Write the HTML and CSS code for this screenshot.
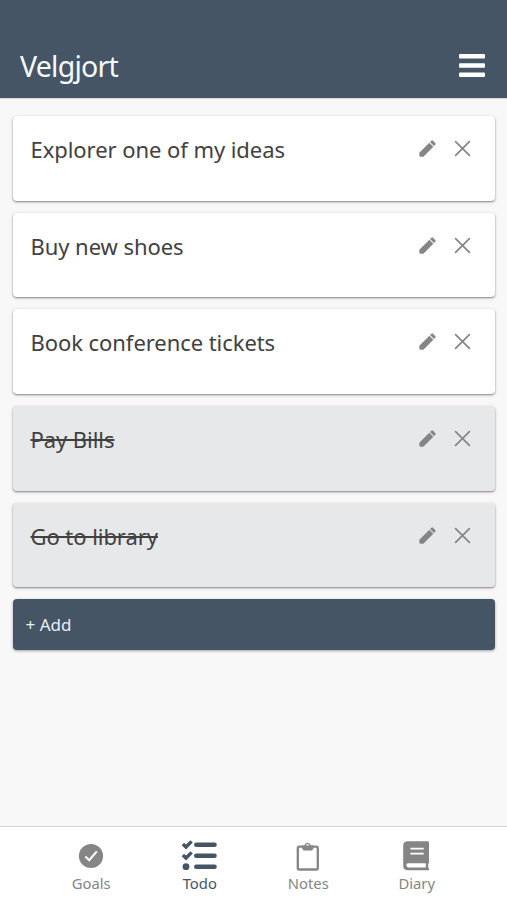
FILE: index.html
```html
<!DOCTYPE html>
<html lang="en">
<head>
<meta charset="utf-8">
<title>Velgjort</title>
<link rel="stylesheet" href="styles.css">
</head>
<body>
<svg class="defs" width="0" height="0">
  <symbol id="pencil" viewBox="0 0 16 16"><path d="M0.3 15.7V11.9L9.7 2.5L13.5 6.3L4.1 15.7H1.3Q.3 15.7.3 14.7Z"/><path d="M10.4 1.9L11.6.7Q12.4 0 13.2.7L15.3 2.8Q16 3.6 15.3 4.4L14.1 5.6Z"/></symbol>
  <symbol id="cross" viewBox="0 0 16 16"><path d="M1.5 1.5L14.5 14.5M14.5 1.5L1.5 14.5" fill="none" stroke="currentColor" stroke-width="1.6" stroke-linecap="round"/></symbol>
</svg>
<div class="app">
  <header class="header">
    <h1 class="title">Velgjort</h1>
    <svg class="menu" viewBox="0 0 26 23"><rect width="26" height="4.6" rx="1"/><rect y="9.2" width="26" height="4.6" rx="1"/><rect y="18.4" width="26" height="4.6" rx="1"/></svg>
  </header>
  <main class="list">
    <div class="card"><span class="text">Explorer one of my ideas</span><svg class="icon"><use href="#pencil"/></svg><svg class="icon"><use href="#cross"/></svg></div>
    <div class="card"><span class="text">Buy new shoes</span><svg class="icon"><use href="#pencil"/></svg><svg class="icon"><use href="#cross"/></svg></div>
    <div class="card"><span class="text">Book conference tickets</span><svg class="icon"><use href="#pencil"/></svg><svg class="icon"><use href="#cross"/></svg></div>
    <div class="card done"><span class="text">Pay Bills</span><svg class="icon"><use href="#pencil"/></svg><svg class="icon"><use href="#cross"/></svg></div>
    <div class="card done"><span class="text">Go to library</span><svg class="icon"><use href="#pencil"/></svg><svg class="icon"><use href="#cross"/></svg></div>
    <div class="add">+ Add</div>
  </main>
  <nav class="tabs">
    <div class="tab"><svg class="tab-icon" viewBox="0 0 36 32"><circle cx="18" cy="17" r="12.1"/><path d="M12.3 17.5L16.2 21.3L23.8 12.4" fill="none" stroke="#fff" stroke-width="2.1"/></svg><span>Goals</span></div>
    <div class="tab active"><svg class="tab-icon" viewBox="0 0 36 32"><g fill="none" stroke="currentColor"><path d="M.9 5L4 8L9.6 2.4M.9 16L4 19L9.6 13.4" stroke-width="3.4"/><path d="M14.2 5.8H32.6M14.2 16.8H32.6M14.2 27.8H32.6" stroke-width="4.4" stroke-linecap="round"/></g><circle cx="4" cy="27.7" r="3.4"/></svg><span>Todo</span></div>
    <div class="tab"><svg class="tab-icon" viewBox="0 0 36 32"><rect x="7.8" y="7.7" width="20" height="22.8" rx="1.5" fill="none" stroke="currentColor" stroke-width="2.3"/><path fill-rule="evenodd" d="M12 6.4H14.3A3.4 3.4 0 0 1 20.9 6.4H23.6V9.2L22 11.6H13.6L12 9.2ZM16.2 6.5A1.4 1.4 0 1 0 19 6.5A1.4 1.4 0 1 0 16.2 6.5Z"/></svg><span>Notes</span></div>
    <div class="tab"><svg class="tab-icon" viewBox="0 0 36 32"><path fill-rule="evenodd" d="M8.2 2.2H29Q30 2.2 30 3.2V23.5L29.2 25V28.8L30 29.2V31.2H8.2Q4.2 31 4.2 27V6.4Q4.2 2.5 8.2 2.2ZM9.2 24.2Q7.4 24.4 7.4 26.3T9.2 28.4H26.8V24.2ZM11.4 8.7V10.5H24.7V8.7ZM11.4 13.7V15.5H24.7V13.7Z"/></svg><span>Diary</span></div>
  </nav>
</div>
</body>
</html>
```
FILE: styles.css
```css
* { box-sizing: border-box; }
body { margin: 0; font-family: "Noto Sans", "Open Sans", sans-serif; }
.defs { display: none; }
.app { height: 900px; display: flex; flex-direction: column; background: #f8f8f8; }
.header { height: 98px; flex: none; padding: 33px 22px 0 20px; display: flex; justify-content: space-between; align-items: center; background: #455565; color: #f5faff; box-shadow: 0 1px 1px rgba(0,0,0,.12); }
.title { margin: 0; font-size: 28.5px; font-weight: 400; line-height: 38px; letter-spacing: -.75px; }
.menu { width: 26px; height: 23px; fill: #fff; }
.list { flex: 1; padding: 18px 12.5px 0 13px; display: flex; flex-direction: column; gap: 12px; }
.card { height: 84.65px; padding: 17px 23.5px 0 17.5px; display: flex; align-items: flex-start; background: #fff; border-radius: 4px; box-shadow: 0 1px 2px rgba(0,0,0,.42), 0 1px 4px rgba(0,0,0,.1); color: #414141; }
.text { margin-right: auto; font-size: 22px; line-height: 32px; letter-spacing: -.06px; }
.done { background: #e6e8e9; }
.done .text { text-decoration: line-through; text-decoration-thickness: 1.5px; }
.icon { width: 17px; height: 17px; margin: 7px 0 0 18px; color: #858585; fill: currentColor; }
.add { height: 50.5px; padding-left: 12.5px; display: flex; align-items: center; background: #455565; color: #e8eff6; border-radius: 4px; box-shadow: 0 1px 3px rgba(0,0,0,.35); font-size: 17px; }
.tabs { height: 74px; flex: none; padding: 12px 36px 0 37px; display: grid; grid-template-columns: repeat(4, 1fr); border-top: 1px solid #d4d4d4; background: #fff; }
.tab { display: flex; flex-direction: column; align-items: center; color: #858585; font-size: 14.8px; line-height: 20px; }
.tab-icon { width: 36px; height: 32px; margin-bottom: 2px; fill: currentColor; overflow: visible; }
.active { color: #455565; }
```
